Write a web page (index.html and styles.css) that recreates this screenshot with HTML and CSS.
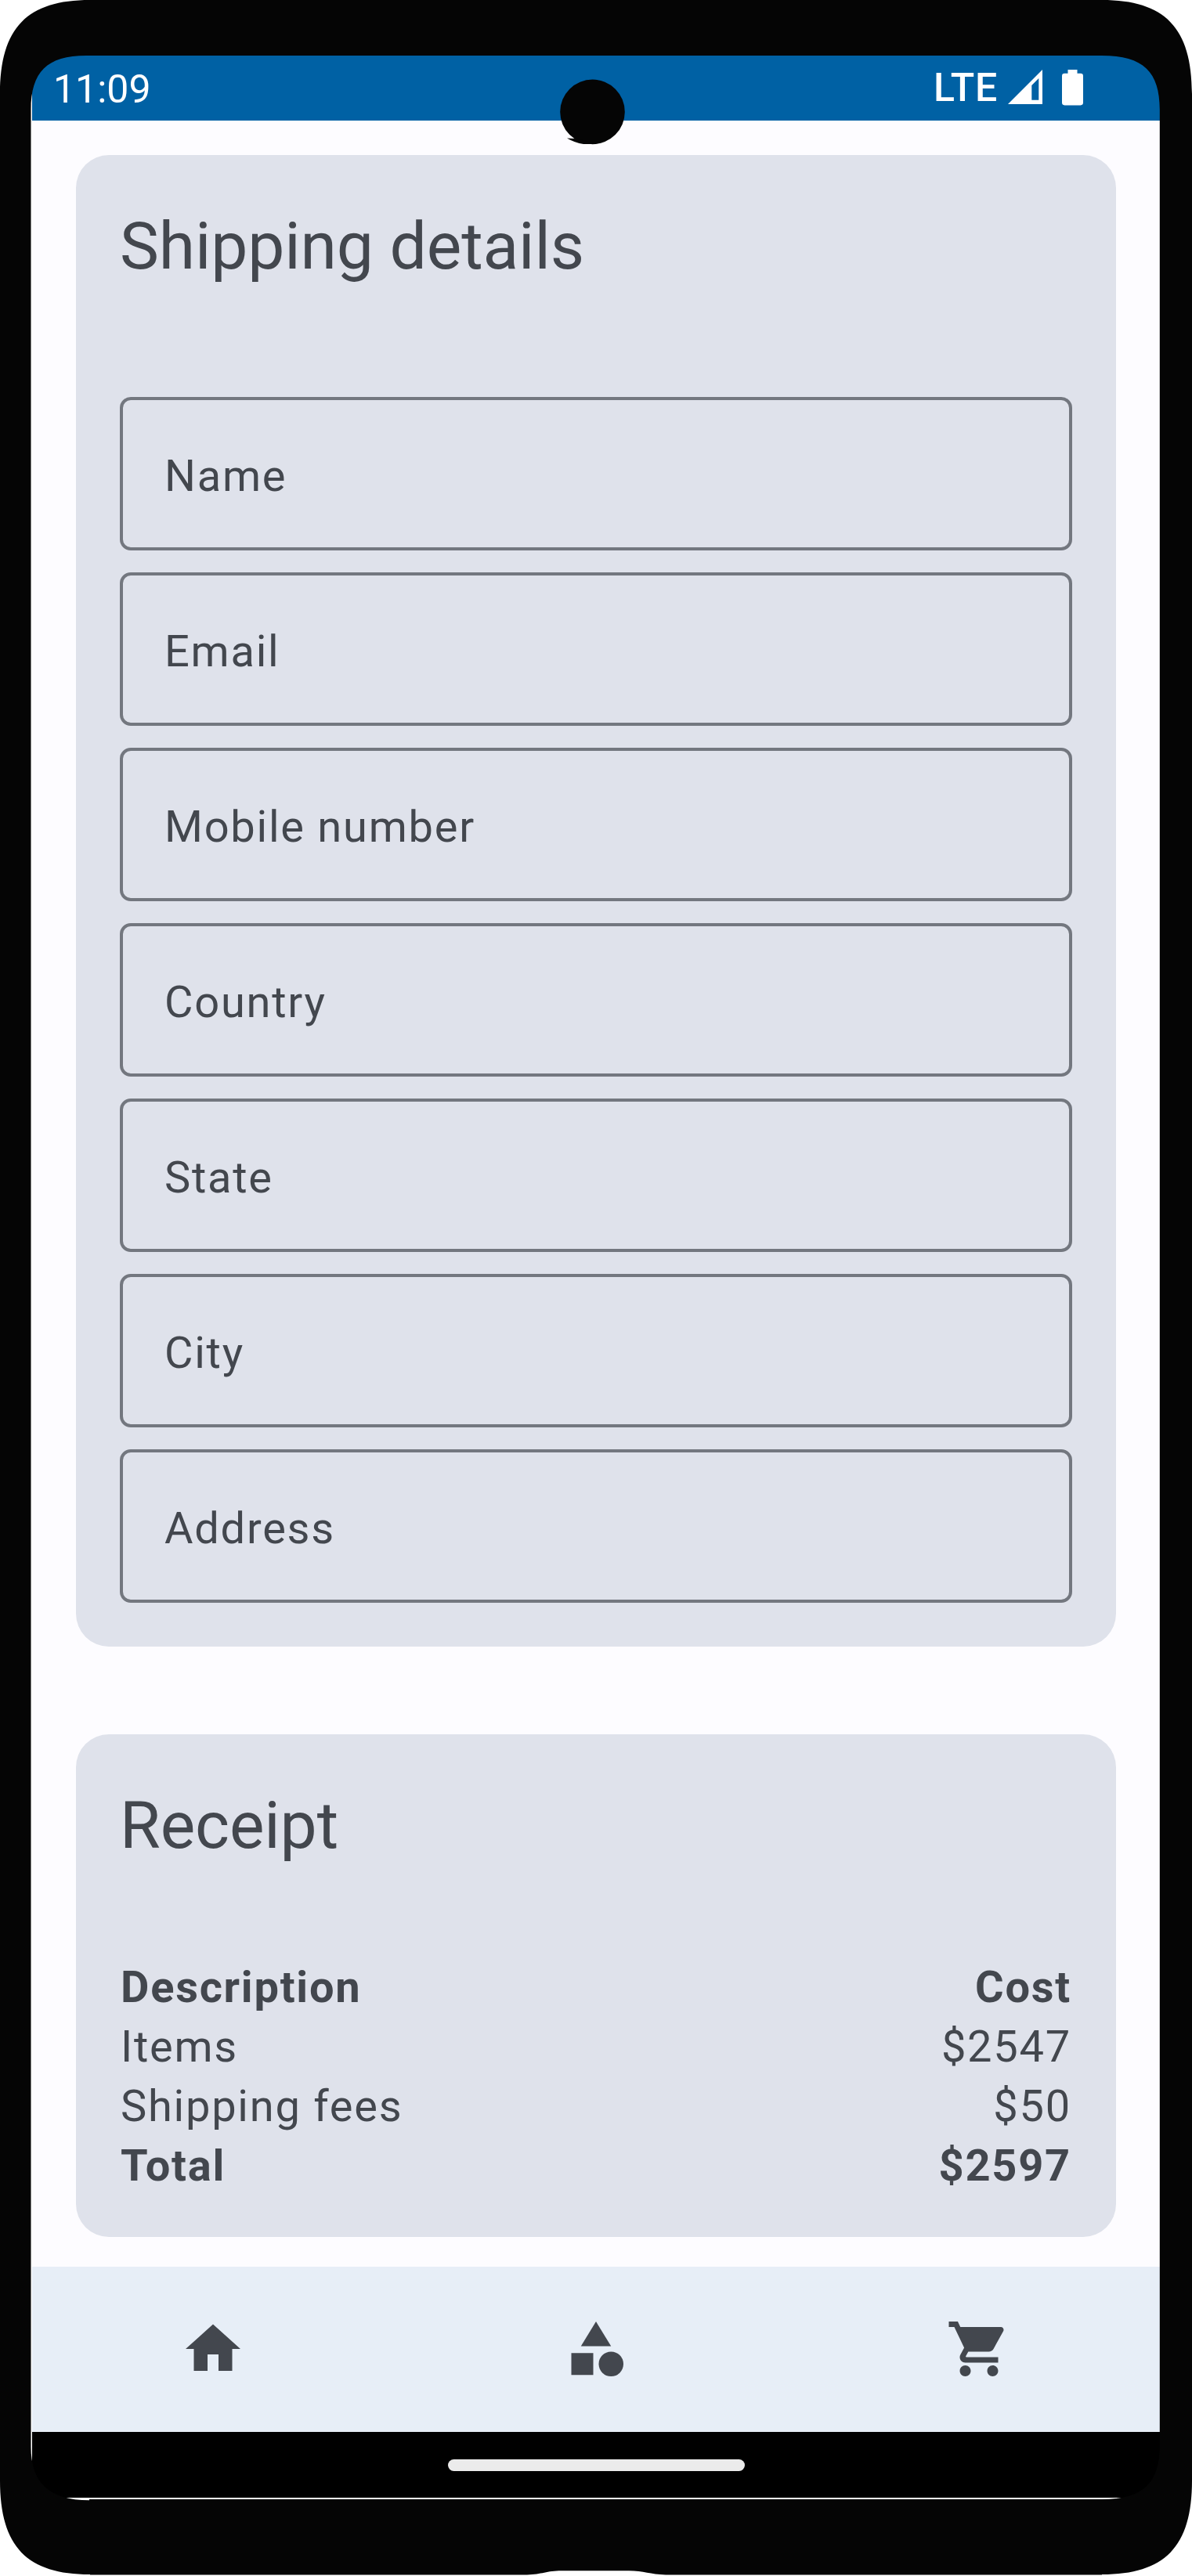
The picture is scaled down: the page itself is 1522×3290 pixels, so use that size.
FILE: index.html
```html
<!DOCTYPE html>
<html lang="en">
<head>
<meta charset="utf-8">
<title>Checkout</title>
<link rel="stylesheet" href="styles.css">
</head>
<body>
<div class="phone">
  <div class="screen">
    <header class="status-bar">
      <span class="time">11:09</span>
      <div class="status-icons">
        <span class="network">LTE</span>
        <svg class="signal" width="44" height="44" viewBox="0 0 44 44"><path fill="#fff" fill-rule="evenodd" d="M0 44H44V0ZM30.3 38.7V20L39.3 11V38.7Z"/></svg>
        <svg class="battery" width="27" height="46" viewBox="0 0 27 46"><path fill="#fff" d="M7.5 0h12v4.8h4.2a3.3 3.3 0 0 1 3.3 3.3v34a3.3 3.3 0 0 1-3.3 3.3H3.3A3.3 3.3 0 0 1 0 42.100V8.100a3.300 3.300 0 0 1 3.300-3.300h4.200z"/></svg>
      </div>
    </header>
    <main class="content">
      <section class="card shipping">
        <h1 class="card-title">Shipping details</h1>
        <div class="fields">
          <div class="field">Name</div>
          <div class="field">Email</div>
          <div class="field">Mobile number</div>
          <div class="field">Country</div>
          <div class="field">State</div>
          <div class="field">City</div>
          <div class="field">Address</div>
        </div>
      </section>
      <section class="card receipt">
        <h2 class="card-title">Receipt</h2>
        <div class="rows">
          <div class="row strong"><span>Description</span><span>Cost</span></div>
          <div class="row"><span>Items</span><span>$2547</span></div>
          <div class="row"><span>Shipping fees</span><span>$50</span></div>
          <div class="row strong"><span>Total</span><span>$2597</span></div>
        </div>
      </section>
    </main>
    <nav class="tabs">
      <a class="tab"><svg class="icon" viewBox="0 0 24 24"><path d="M10 20v-6h4v6h5v-8h3L12 3 2 12h3v8z"/></svg></a>
      <a class="tab"><svg class="icon" viewBox="0 0 24 24"><path d="M12 2l-5.500 9h11z"/><circle cx="17.500" cy="17.500" r="4.500"/><path d="M3 13.500h8v8H3z"/></svg></a>
      <a class="tab"><svg class="icon" viewBox="0 0 24 24"><path d="M7 18c-1.100 0-1.990.9-1.990 2S5.900 22 7 22s2-.9 2-2-.9-2-2-2zM1 2v2h2l3.600 7.590-1.350 2.450c-.160.280-.250.610-.250.960 0 1.100.9 2 2 2h12v-2H7.420c-.140 0-.250-.110-.250-.250l.030-.120.900-1.630h7.450c.750 0 1.410-.410 1.750-1.030l3.580-6.490c.080-.140.120-.310.120-.480 0-.550-.450-1-1-1H5.210l-.940-2H1zm16 16c-1.100 0-1.990.9-1.990 2s.890 2 1.990 2 2-.9 2-2-.9-2-2-2z"/></svg></a>
    </nav>
    <div class="gesture-bar"><span class="pill"></span></div>
  </div>
  <svg class="bezel" width="1522" height="3290" viewBox="0 0 1522 3290">
    <path fill="#050505" fill-rule="evenodd" d="M0 120C0 35 35 0 115 0H1407C1487 0 1522 35 1522 120V3168C1522 3253 1487 3288 1407 3288V3288.500H850C830 3288 822 3283.300 803 3283.300H717C698 3283.300 692 3288 673 3288.500H115V3288C35 3288 0 3253 0 3168Z
      M39.500 140V3125C39.500 3170 62 3193.300 114 3193.300V3192H1407C1460 3192 1480.800 3171 1480.800 3123V140C1480.800 92 1460 71 1407 71H110C60 71 39.500 92 39.500 140Z"/>
    <circle cx="756.500" cy="142.900" r="41.300" fill="#050505"/>
    <path fill="#050505" d="M724 176.500L737 177.200 762 183.900H745Q734 182.500 724 176.500Z"/>
  </svg>
</div>
</body>
</html>
```
FILE: styles.css
```css
body {
  margin: 0;
  background: #fff;
  font-family: Roboto, "Liberation Sans", sans-serif;
  color: #43474e;
}

.phone {
  position: relative;
  box-sizing: border-box;
  width: 1522px;
  height: 3290px;
  padding: 71px 41px 100px;
}

.screen {
  display: flex;
  flex-direction: column;
  height: 3119px;
  background: #fdfcff;
}

/* Device frame, drawn over the edges of the screen */
.bezel {
  position: absolute;
  top: 0;
  left: 0;
}

.status-bar {
  display: flex;
  justify-content: space-between;
  box-sizing: border-box;
  height: 83px;
  padding: 0 98px 0 27px;
  background: #0061a4;
  color: #fff;
  font-size: 50px;
  line-height: 87px;
}

.status-icons {
  display: flex;
  align-items: flex-start;
}

.network {
  font-size: 50px;
  font-weight: 500;
  line-height: 82px;
  letter-spacing: 0.800px;
  margin-right: 13px;
}

.signal {
  margin: 18px 25px 0 0;
}

.battery {
  margin-top: 17.700px;
}

.content {
  flex: 1;
  padding: 44px 56px 0;
}

.card {
  box-sizing: border-box;
  border-radius: 42px;
  background: #dfe2eb;
  padding: 56px;
}

.receipt {
  margin-top: 112px;
  padding-bottom: 53px;
}

.card-title {
  margin: 0;
  font-size: 84px;
  font-weight: 400;
  line-height: 122px;
  letter-spacing: -0.130px;
}

.fields {
  display: flex;
  flex-direction: column;
  gap: 28px;
  margin-top: 131px;
}

.field {
  box-sizing: border-box;
  height: 196px;
  padding: 0 53px;
  border: 4px solid #73777f;
  border-radius: 14px;
  font-size: 56px;
  line-height: 195px;
  letter-spacing: 1.750px;
}

.rows {
  margin-top: 107px;
  padding: 0 1px;
}

.row {
  display: flex;
  justify-content: space-between;
  font-size: 56px;
  line-height: 76px;
  letter-spacing: 1.750px;
}

.strong {
  font-weight: 700;
}

.tabs {
  display: flex;
  gap: 28px;
  height: 211px;
  box-sizing: border-box;
  padding: 0 1px 1px 0;
  background: #e7eef7;
}

.tab {
  display: flex;
  flex: 1;
  align-items: center;
  justify-content: center;
}

.icon {
  width: 84px;
  height: 84px;
  fill: #43474e;
}

.gesture-bar {
  display: flex;
  align-items: center;
  justify-content: center;
  height: 84px;
  background: #000;
}

.pill {
  width: 379px;
  height: 15px;
  border-radius: 8px;
  background: #ebebeb;
}
```
